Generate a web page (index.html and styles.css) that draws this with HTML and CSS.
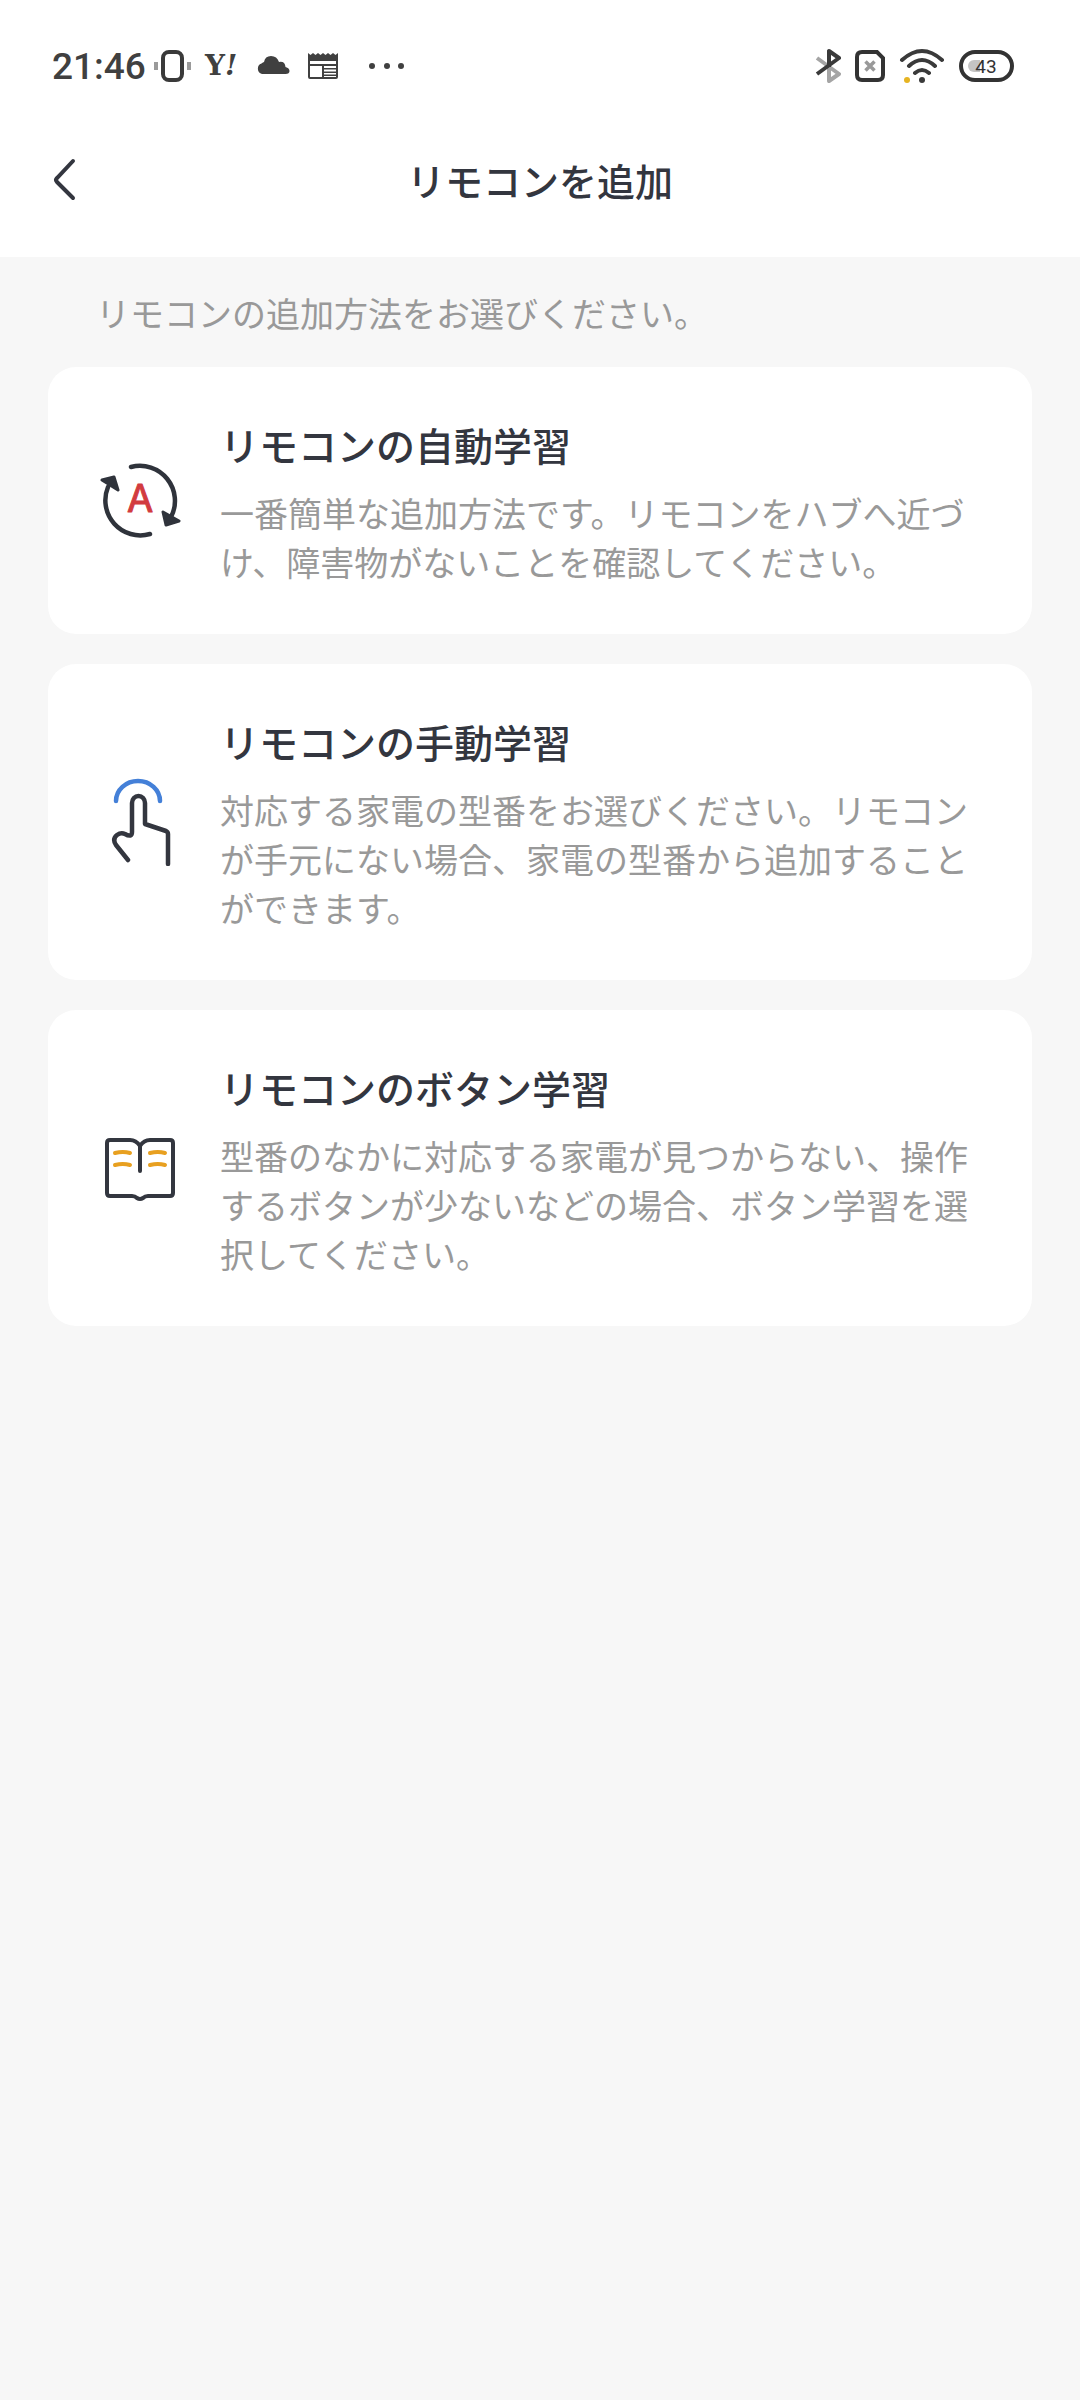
FILE: index.html
```html
<!DOCTYPE html>
<html lang="ja">
<head>
<meta charset="utf-8">
<meta name="viewport" content="width=device-width">
<title>リモコンを追加</title>
<link rel="stylesheet" href="styles.css">
</head>
<body>
<header class="top">
  <div class="status">
    <div class="status-group">
      <div class="clock">
        <time>21:46</time>
        <svg width="37" height="40" viewBox="0 0 37 40"><rect x="9" y="6" width="19" height="28" rx="6" fill="none" stroke="#3a3a3a" stroke-width="4"/><path d="M2 16v8M35 16v8" stroke="#9a9a9a" stroke-width="4"/></svg>
      </div>
      <span class="yahoo">Y<i>!</i></span>
      <svg width="34" height="40" viewBox="0 0 34 40"><path fill="#404040" d="M5 28a5.500 5.500 0 0 1-.5-10.500Q6 16 7 16Q8 10 14 10q6 0 8 6 6-1 6.500 5 4 1 4 4 0 3-4 3z"/></svg>
      <svg width="36" height="40" viewBox="0 0 36 40"><path fill="#404040" fill-rule="evenodd" d="M3 7l2.500 2L8 7l2.500 2L13 7l2.500 2L18 7l2.500 2L23 7l2.500 2L28 7l2.500 2L33 7v24q0 2-2 2H5q-2 0-2-2zM5 15v3h26v-3zM5 20v11h12V20zM19 20v2h12v-2zM19 23.500v2h12v-2zM19 27v1.500h12V27zM19 30v1h12v-1z"/></svg>
      <svg width="50" height="40" viewBox="0 0 50 40" fill="#404040"><circle cx="17" cy="20" r="3"/><circle cx="32" cy="20" r="3"/><circle cx="46" cy="20" r="3"/></svg>
    </div>
    <div class="status-group">
      <svg width="27" height="40" viewBox="0 0 27 40" fill="none" stroke-width="4" stroke-linejoin="round"><path stroke="#a5a5a5" d="M3 12l22 16-10 7V20"/><path stroke="#3a3a3a" d="M3 28l22-16-10-7v16"/></svg>
      <svg width="30" height="40" viewBox="0 0 30 40" fill="none"><path stroke="#333" stroke-width="4" d="M7 6h15l6 6v17q0 5-5 5H7q-5 0-5-5V11q0-5 5-5z"/><path stroke="#999" stroke-width="3.500" d="M10.500 15.500l9 9M19.500 15.500l-9 9"/></svg>
      <svg width="46" height="40" viewBox="0 0 46 40" fill="none" stroke="#3a3a3a" stroke-width="4" stroke-linecap="round"><path d="M3 14q20-18 40 0M10 20q13-12 26 0M16 27q7-6 14 0"/><circle cx="23" cy="34" r="3" fill="#3a3a3a" stroke="none"/><circle cx="8" cy="34" r="3" fill="#e6b422" stroke="none"/></svg>
      <svg width="56" height="40" viewBox="0 0 56 40"><rect x="2" y="6" width="51" height="28" rx="14" fill="none" stroke="#333" stroke-width="4"/><path fill="#c4c4c4" d="M21 14h-6a6 6 0 0 0 0 12h6z"/><text class="level" x="27" y="27" text-anchor="middle">43</text></svg>
    </div>
  </div>
  <nav class="nav">
    <button class="back" type="button" aria-label="戻る"><svg width="40" height="60" viewBox="0 0 40 60"><path d="M29 11L13 28q-2 2 0 4l16 16" fill="none" stroke="#33363f" stroke-width="4" stroke-linecap="round"/></svg></button>
    <h1 class="title">リモコンを追加</h1>
  </nav>
</header>
<main class="content">
  <p class="hint">リモコンの追加方法をお選びください。</p>
  <a class="card" href="#auto">
    <svg class="icon" viewBox="0 -1 88 88"><g fill="none" stroke="#2f333b" stroke-width="4.500" stroke-linecap="round"><path d="M35 10A35 35 0 0 1 75 60M12 30A35 35 0 0 0 54 77"/></g><path d="M67 55l16 9-13 4zM6 23l12-3 4 13z" fill="#2f333b" stroke="#2f333b" stroke-width="3" stroke-linejoin="round"/><text class="letter" x="44" y="55" text-anchor="middle">A</text></svg>
    <div class="text">
      <h2 class="name">リモコンの自動学習</h2>
      <p class="desc">一番簡単な追加方法です。リモコンをハブへ近づけ、障害物がないことを確認してください。</p>
    </div>
  </a>
  <a class="card" href="#manual">
    <svg class="icon" viewBox="0 0 88 88" fill="none" stroke-width="4.500" stroke-linecap="round" stroke-linejoin="round"><path stroke="#4480d8" d="M20 23a22 20 0 0 1 44 0"/><path stroke="#33363f" d="M32 82L20 67q-4-6 1-10 4-3 8-1 7 4 7-2V25a6.500 7 0 0 1 13 0v21l21 7q2 1 2 3v30"/></svg>
    <div class="text">
      <h2 class="name">リモコンの手動学習</h2>
      <p class="desc">対応する家電の型番をお選びください。リモコンが手元にない場合、家電の型番から追加することができます。</p>
    </div>
  </a>
  <a class="card" href="#button">
    <svg class="icon" viewBox="0 2 88 88" fill="none" stroke-width="4" stroke-linecap="round" stroke-linejoin="round"><path stroke="#33363f" d="M44 49V24q-4-6-10-6H14q-3 0-3 3v50q0 3 3 3h22q3 0 5 2 3 2 6 0 2-2 5-2h22q3 0 3-3V21q0-3-3-3H54q-6 0-10 6"/><path stroke="#e8a020" d="M19 31q8-2 15 0M19 43q8-2 15 0M54 31q8-2 15 0M54 43q8-2 15 0"/></svg>
    <div class="text">
      <h2 class="name">リモコンのボタン学習</h2>
      <p class="desc">型番のなかに対応する家電が見つからない、操作するボタンが少ないなどの場合、ボタン学習を選択してください。</p>
    </div>
  </a>
</main>
</body>
</html>
```
FILE: styles.css
```css
* { box-sizing: border-box; margin: 0; padding: 0; }
body {
  min-height: 100vh;
  background: #f7f7f7;
  color: #33363f;
  font-family: "Noto Sans CJK JP", sans-serif;
}
svg { display: block; flex: none; }
.top { background: #fff; }
.status {
  display: flex;
  justify-content: space-between;
  padding: 46px 65px 0 52px;
}
.status-group { display: flex; align-items: center; gap: 14px; height: 40px; }
.clock {
  display: flex;
  align-items: center;
  gap: 8px;
  color: #404040;
  font: 500 37px/44px Roboto, sans-serif;
}
.clock time { padding-top: 2px; }
.yahoo {
  width: 38px;
  color: #404040;
  font: bold 28px/40px "DejaVu Serif", serif;
  white-space: nowrap;
}
.level { font: 19px Roboto, sans-serif; fill: #333; }
.nav {
  display: grid;
  grid-template-columns: 40px 1fr 40px;
  align-items: center;
  padding: 64px 44px 47px;
}
.back { border: 0; background: none; cursor: pointer; }
.title { font-size: 38px; font-weight: 500; line-height: 60px; text-align: center; }
.content {
  display: flex;
  flex-direction: column;
  gap: 30px;
  padding: 31px 48px;
}
.hint { padding: 0 48px; color: #999; font-size: 34px; line-height: 49px; }
.card {
  display: flex;
  align-items: center;
  gap: 36px;
  padding: 47px 60px 48px 48px;
  border-radius: 28px;
  background: #fff;
  color: inherit;
  text-decoration: none;
}
.icon { width: 88px; height: 88px; }
.letter { font: 38px Inter, sans-serif; fill: #d23b3f; stroke: #d23b3f; stroke-width: 1px; stroke-linejoin: round; }
.text { flex: 1; }
.name { margin-bottom: 14px; font-size: 39px; font-weight: 500; line-height: 60px; }
.desc { color: #999; font-size: 34px; line-height: 49px; }
```
